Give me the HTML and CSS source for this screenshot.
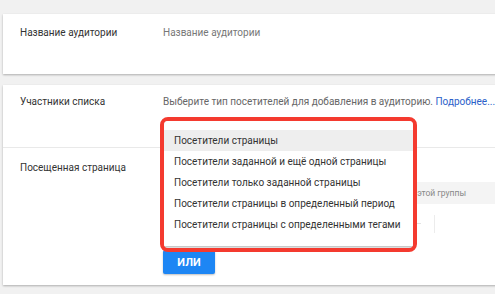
FILE: index.html
```html
<!DOCTYPE html>
<html lang="ru">
<head>
<meta charset="utf-8">
<link rel="stylesheet" href="styles.css">
</head>
<body>
<div class="page">
  <section class="card card-name">
    <div class="row">
      <div class="label">Название аудитории</div>
      <div class="value placeholder">Название аудитории</div>
    </div>
  </section>
  <section class="card card-members">
    <div class="row row-members">
      <div class="label">Участники списка</div>
      <div class="value desc">Выберите тип посетителей для добавления в аудиторию. <a class="link">Подробнее...</a>
        <div class="highlight-box">
          <ul class="menu">
            <li class="item active">Посетители страницы</li>
            <li class="item">Посетители заданной и ещё одной страницы</li>
            <li class="item">Посетители только заданной страницы</li>
            <li class="item">Посетители страницы в определенный период</li>
            <li class="item">Посетители страницы с определенными тегами</li>
          </ul>
        </div>
      </div>
    </div>
    <div class="row row-page">
      <div class="label">Посещенная страница</div>
      <div class="value rule">
        <div class="band"><span class="band-text">Включить посетителей этой группы</span></div>
        <div class="cond">
          <div class="cond-field"></div>
          <div class="cond-sep"></div>
        </div>
        <button class="btn">ИЛИ</button>
      </div>
    </div>
  </section>
</div>
</body>
</html>
```
FILE: styles.css
```css
html, body {
  margin: 0;
  padding: 0;
}
body {
  background: #f1f1f1;
  font-family: Roboto, "Noto Sans", sans-serif;
  font-size: 10px;
  color: #333;
  width: 495px;
  height: 294px;
  overflow: hidden;
}
.page {
  padding: 14px 0 0 3px;
  display: flex;
  flex-direction: column;
  gap: 11px;
  width: 510px;
}
.card {
  background: #fff;
  box-shadow: 0 1px 2px rgba(0, 0, 0, 0.28);
}
.card-name {
  height: 60px;
}
.row {
  display: flex;
  line-height: 14px;
}
.label {
  width: 160px;
  padding-left: 17px;
  box-sizing: border-box;
  flex: none;
  color: #333;
}
.value {
  flex: 1;
  position: relative;
}
.card-name .row {
  padding-top: 12px;
}
.placeholder {
  color: #777;
}
.card-members {
  height: 200px;
}
.row-members {
  height: 63px;
  padding-top: 10px;
  box-sizing: border-box;
  border-bottom: 1px solid #e9e9e9;
}
.desc {
  color: #666;
  white-space: nowrap;
}
.link {
  color: #2b5fc9;
}
.highlight-box {
  position: absolute;
  left: -3px;
  top: 22px;
  width: 257px;
  height: 135px;
  box-sizing: border-box;
  border: 4px solid #f43a2f;
  border-radius: 8px;
  z-index: 5;
  background: #fff;
  overflow: hidden;
}
.menu {
  list-style: none;
  margin: 0;
  padding: 9px 0 0;
  height: 125px;
  box-sizing: border-box;
  background: #fff;
  box-shadow: 0 1px 3px rgba(0, 0, 0, 0.35);
}
.item {
  height: 21px;
  line-height: 21px;
  padding-left: 10px;
  color: #333;
  white-space: nowrap;
}
.item.active {
  background: #eeeeee;
}
.row-page {
  padding-top: 13px;
}
.rule {
  display: flex;
  flex-direction: column;
  align-items: flex-start;
}
.band {
  margin-top: 21px;
  align-self: stretch;
  height: 22px;
  background: #f4f4f4;
  line-height: 22px;
  font-size: 8.5px;
  color: #888;
  white-space: nowrap;
  overflow: hidden;
}
.band-text {
  display: inline-block;
  width: 303px;
  text-align: right;
}
.cond {
  display: flex;
  align-items: flex-start;
  height: 36px;
  align-self: stretch;
  padding-left: 250px;
  box-sizing: border-box;
}
.cond-field {
  width: 8px;
  height: 19px;
  border-bottom: 1px solid #e3e3e3;
}
.cond-sep {
  margin-left: 13px;
  margin-top: 11px;
  width: 0;
  height: 18px;
  border-left: 1px solid #ececec;
}
.btn {
  margin-top: 10px;
  width: 52px;
  height: 24px;
  border: none;
  border-radius: 2px;
  background: #1d86f4;
  color: #fff;
  font-family: Roboto, "Noto Sans", sans-serif;
  font-weight: 700;
  font-size: 11px;
  padding: 0;
  box-shadow: 0 1px 2px rgba(0, 0, 0, 0.25);
}
```
